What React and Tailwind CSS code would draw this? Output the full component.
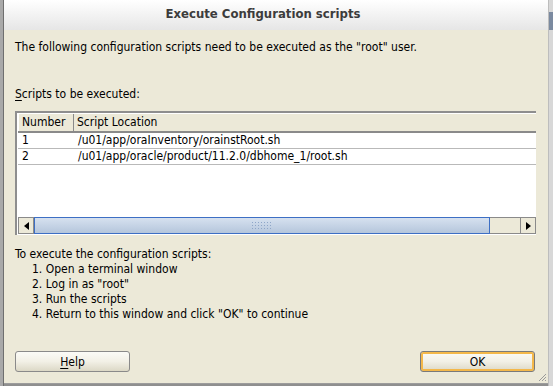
import { useState } from "react";

function Underlined({ ch }) {
     return <span className="underline underline-offset-2">{ch}</span>;
}

function Btn({ children, primary }) {
     return (
          <button
               className={
                    primary
                         ? "w-[115px] h-[21px] rounded-[3px] border border-[#7a7a7a] shadow-[inset_0_0_0_2px_#f4b84a] bg-gradient-to-b from-[#fbfbf7] via-[#f2f0e6] to-[#dcd8c6] text-[12px] text-black"
                         : "w-[115px] h-[21px] rounded-[3px] border border-[#8a8a8a] bg-gradient-to-b from-[#fbfbf7] via-[#f2f0e6] to-[#dcd8c6] text-[12px] text-black"
               }
          >
               {children}
          </button>
     );
}

export default function App() {
     const [rows] = useState([
          { n: "1", path: "/u01/app/oraInventory/orainstRoot.sh" },
          { n: "2", path: "/u01/app/oracle/product/11.2.0/dbhome_1/root.sh" },
     ]);

     return (
          <div
               className="w-[553px] h-[386px] flex bg-[#8f8f8f] overflow-hidden"
               style={{ fontFamily: '"DejaVu Sans Condensed", "DejaVu Sans", sans-serif' }}
          >
               <div className="w-[4px] bg-[#a9a9a9] border-r border-[#6f6f6f]" />
               <div className="w-[544px] h-[384px] flex flex-col border-b border-[#9c9c9c]">
                    {/* title bar */}
                    <div className="h-[30px] bg-gradient-to-b from-white to-[#e6e6e6] flex items-center justify-center pr-[26px]">
                         <span className="text-[13px] font-bold text-[#3c3c3c] pb-[3px]">Execute Configuration scripts</span>
                    </div>

                    <div className="flex-1 bg-[#ECE9D8] flex flex-col px-[11px] text-[12px] text-black relative">
                         <p className="mt-[10px] leading-[14px]">The following configuration scripts need to be executed as the "root" user.</p>

                         <p className="mt-[33px] leading-[14px]"><Underlined ch="S" />cripts to be executed:</p>

                         {/* table */}
                         <div className="mt-[10px] w-[521px] h-[124px] border-l-2 border-t-2 border-[#8e8e8e] bg-white flex flex-col pl-[1px] pt-[1px]">
                              <div className="flex h-[19px] bg-[#ECE9D8] border-b-2 border-[#8a8a8a] leading-[17px]">
                                   <div className="w-[56px] pl-[3px] border-r border-[#8a8a8a] border-l border-l-white">Number</div>
                                   <div className="flex-1 pl-[3px]">Script Location</div>
                              </div>
                              {rows.map((r) => (
                                   <div key={r.n} className="flex h-[16px] border-b border-[#b9b9b9] leading-[15px]">
                                        <div className="w-[56px] pl-[4px]">{r.n}</div>
                                        <div className="flex-1 pl-[4px]">{r.path}</div>
                                   </div>
                              ))}
                              <div className="flex-1" />
                              {/* horizontal scrollbar */}
                              <div className="flex h-[17px] mb-[1px]">
                                   <div className="w-[16px] border border-[#8a8a8a] bg-[#ECE9D8] flex items-center justify-center">
                                        <svg width="5" height="8" viewBox="0 0 5 8"><path d="M5 0 L0 4 L5 8 Z" fill="#000" /></svg>
                                   </div>
                                   <div className="w-[456px] border border-[#3d6fc4] bg-gradient-to-b from-[#d6e1ef] to-[#b5c6dc] flex items-center justify-center">
                                        <div className="w-[22px] h-[9px] bg-[radial-gradient(#8ea6c8_1px,transparent_1px)] bg-[length:3px_3px]" />
                                   </div>
                                   <div className="flex-1 bg-[#ECE9D8] border-y border-[#8a8a8a]" />
                                   <div className="w-[16px] border border-[#8a8a8a] bg-[#ECE9D8] flex items-center justify-center">
                                        <svg width="5" height="8" viewBox="0 0 5 8"><path d="M0 0 L5 4 L0 8 Z" fill="#000" /></svg>
                                   </div>
                              </div>
                         </div>

                         <p className="mt-[12px] leading-[15px]">To execute the configuration scripts:</p>
                         <ol className="pl-[17px] leading-[15px]">
                              <li>1. Open a terminal window</li>
                              <li>2. Log in as "root"</li>
                              <li>3. Run the scripts</li>
                              <li>4. Return to this window and click "OK" to continue</li>
                         </ol>

                         <div className="mt-auto mb-[11px] flex justify-between pr-[2px]">
                              <Btn><Underlined ch="H" />elp</Btn>
                              <Btn primary>OK</Btn>
                         </div>

                         <svg className="absolute right-[1px] bottom-[1px]" width="10" height="10" viewBox="0 0 10 10">
                              <path d="M9 2 L2 9 M9 5 L5 9 M9 8 L8 9" stroke="#9a9a9a" strokeWidth="1" />
                         </svg>
                    </div>
               </div>
               <div className="flex-1 bg-[#d8d8d8] border-l border-[#bdbdbd] flex flex-col">
                    <div className="mt-[12px] h-[18px] bg-[#7b8aa0]" />
               </div>
          </div>
     );
}
